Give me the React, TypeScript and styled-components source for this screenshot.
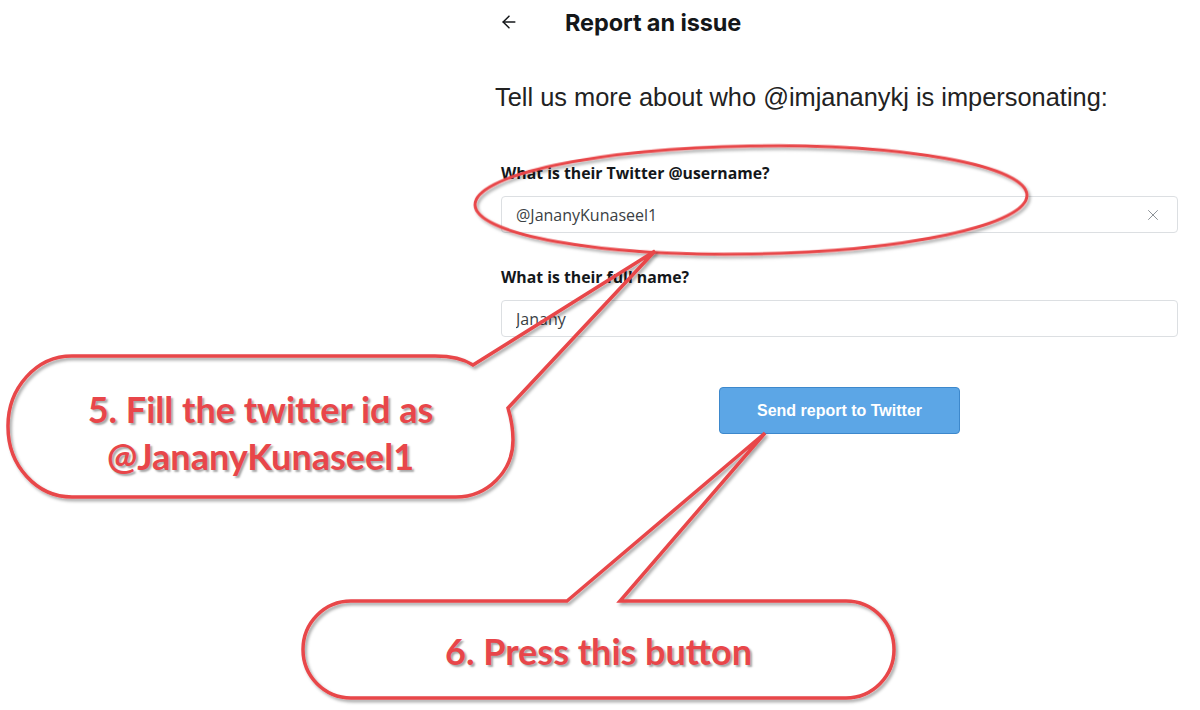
import React from 'react';
import styled, { createGlobalStyle } from 'styled-components';
import { ArrowLeft, X } from 'lucide-react';

const GlobalStyle = createGlobalStyle`
  html, body {
    margin: 0;
    padding: 0;
    background: #ffffff;
  }
  * {
    box-sizing: border-box;
  }
`;

const Page = styled.div`
  position: relative;
  width: 1200px;
  height: 710px;
  overflow: hidden;
  display: flex;
  background: #ffffff;
`;

const Gutter = styled.div`
  width: 478px;
  flex-shrink: 0;
`;

const Panel = styled.div`
  flex: 1;
  padding: 0 22px 0 17px;
  display: flex;
  flex-direction: column;
  color: #14171a;
`;

const Header = styled.div`
  height: 44px;
  display: flex;
  align-items: center;
  gap: 27px;
  padding-left: 4px;
`;

const BackButton = styled.button`
  border: none;
  background: none;
  padding: 0;
  width: 20px;
  height: 20px;
  display: flex;
  align-items: center;
  justify-content: center;
  color: #14171a;
  cursor: pointer;
`;

const Title = styled.h1`
  margin: 0 0 0 19px;
  font-family: Inter, 'Noto Sans', sans-serif;
  font-weight: 700;
  font-size: 23.5px;
  letter-spacing: -0.1px;
`;

const Lead = styled.p`
  margin: 38px 0 0 0;
  font-family: 'Liberation Sans', Arial, sans-serif;
  font-size: 25.4px;
  line-height: 30px;
  color: #222222;
  white-space: nowrap;
`;

const Form = styled.form`
  margin-top: 51px;
  padding-left: 6px;
  display: flex;
  flex-direction: column;
`;

const Field = styled.div<{ $gap?: number }>`
  display: flex;
  flex-direction: column;
  gap: 13px;
  margin-top: ${(p) => p.$gap ?? 0}px;
`;

const Label = styled.label`
  font-family: 'Open Sans', 'Noto Sans', sans-serif;
  font-weight: 700;
  font-size: 15.8px;
  line-height: 20px;
  color: #14171a;
`;

const InputBox = styled.div`
  height: 37px;
  border: 1px solid #dcdfe2;
  border-radius: 4px;
  display: flex;
  align-items: center;
  padding: 0 14px 0 14px;
  background: #ffffff;
`;

const Input = styled.input`
  flex: 1;
  border: none;
  outline: none;
  background: transparent;
  font-family: 'Open Sans', 'Noto Sans', sans-serif;
  font-size: 16px;
  color: #3b3f44;
  padding: 0;
`;

const Clear = styled.span`
  display: flex;
  align-items: center;
  color: #8a8f94;
  margin-right: 1px;
`;

const Actions = styled.div`
  margin-top: 50px;
  display: flex;
  justify-content: center;
`;

const SendButton = styled.button`
  width: 241px;
  height: 47px;
  border: 1px solid #3d88cc;
  border-radius: 4px;
  background: #5ca6e6;
  color: #ffffff;
  font-family: 'Liberation Sans', Arial, sans-serif;
  font-weight: 700;
  font-size: 16px;
  cursor: pointer;
`;

const Overlay = styled.svg`
  position: absolute;
  left: 0;
  top: 0;
  pointer-events: none;
`;

const CalloutText = styled.div<{ $x: number; $y: number; $w: number; $h: number; $pt?: number }>`
  position: absolute;
  left: ${(p) => p.$x}px;
  top: ${(p) => p.$y}px;
  width: ${(p) => p.$w}px;
  height: ${(p) => p.$h}px;
  padding-top: ${(p) => p.$pt ?? 0}px;
  display: flex;
  flex-direction: column;
  align-items: center;
  justify-content: center;
  font-family: Lato, 'Open Sans', sans-serif;
  font-weight: 700;
  font-size: 36px;
  line-height: 47px;
  color: #e8464a;
  text-shadow: 2px 2px 2px rgba(0, 0, 0, 0.35);
  white-space: nowrap;
  pointer-events: none;
`;

const RED = '#e8464a';

const bubbleFiveBody =
  'M 72 356 L 435 356 C 452 356 464 359 473 365 L 508 408 C 511 418 513 428 513 440 A 57 57 0 0 1 456 497 L 72 497 A 64 70 0 0 1 8 427 A 64 70 0 0 1 72 356 Z';
const bubbleFiveOutline =
  'M 473 365 L 655 251 L 508 408 C 511 418 513 428 513 440 A 57 57 0 0 1 456 497 L 72 497 A 64 70 0 0 1 8 427 A 64 70 0 0 1 72 356 L 435 356 C 452 356 464 359 473 365 Z';

const bubbleSixBody =
  'M 351 601 L 846 601 A 48 48.5 0 0 1 894 649.5 A 48 48.5 0 0 1 846 698 L 351 698 A 48 48.5 0 0 1 303 649.5 A 48 48.5 0 0 1 351 601 Z';
const bubbleSixOutline =
  'M 567 601 L 765 433 L 620 601 L 846 601 A 48 48.5 0 0 1 894 649.5 A 48 48.5 0 0 1 846 698 L 351 698 A 48 48.5 0 0 1 303 649.5 A 48 48.5 0 0 1 351 601 Z';

const App: React.FC = () => {
  return (
    <Page>
      <GlobalStyle />
      <Gutter />
      <Panel>
        <Header>
          <BackButton type="button" aria-label="Back">
            <ArrowLeft size={20} strokeWidth={1.8} />
          </BackButton>
          <Title>Report an issue</Title>
        </Header>
        <Lead>Tell us more about who @imjananykj is impersonating:</Lead>
        <Form onSubmit={(e) => e.preventDefault()}>
          <Field>
            <Label>What is their Twitter @username?</Label>
            <InputBox>
              <Input defaultValue="@JananyKunaseel1" />
              <Clear>
                <X size={18} strokeWidth={1.3} />
              </Clear>
            </InputBox>
          </Field>
          <Field $gap={34}>
            <Label>What is their full name?</Label>
            <InputBox>
              <Input defaultValue="Janany" />
            </InputBox>
          </Field>
          <Actions>
            <SendButton type="submit">Send report to Twitter</SendButton>
          </Actions>
        </Form>
      </Panel>

      <Overlay width={1200} height={710} viewBox="0 0 1200 710">
        <defs>
          <filter id="shade" x="-5%" y="-5%" width="115%" height="125%">
            <feDropShadow dx="2" dy="2.5" stdDeviation="1.5" floodColor="#000" floodOpacity="0.35" />
          </filter>
        </defs>
        <ellipse
          cx={751}
          cy={200}
          rx={276}
          ry={54}
          transform="rotate(-1 751 200)"
          fill="none"
          stroke={RED}
          strokeWidth={3}
          filter="url(#shade)"
        />
        <path d={bubbleFiveBody} fill="#ffffff" />
        <path d={bubbleFiveOutline} fill="none" stroke={RED} strokeWidth={3.5} strokeLinejoin="miter" filter="url(#shade)" />
        <path d={bubbleSixBody} fill="#ffffff" />
        <path d={bubbleSixOutline} fill="none" stroke={RED} strokeWidth={3.5} strokeLinejoin="miter" filter="url(#shade)" />
      </Overlay>

      <CalloutText $x={8} $y={356} $w={505} $h={141} $pt={12}>
        <span>5. Fill the twitter id as</span>
        <span>@JananyKunaseel1</span>
      </CalloutText>
      <CalloutText $x={303} $y={601} $w={591} $h={97} $pt={4}>
        <span>6. Press this button</span>
      </CalloutText>
    </Page>
  );
};

export default App;
